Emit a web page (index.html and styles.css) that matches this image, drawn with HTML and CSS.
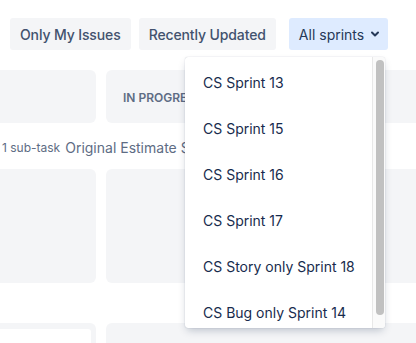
FILE: index.html
```html
<!DOCTYPE html>
<html lang="en">
<head>
  <meta charset="UTF-8" />
  <title>Board</title>
  <link rel="stylesheet" href="styles.css">
</head>
<body>
  <div class="toolbar">
    <button class="filter">Only My Issues</button>
    <button class="filter">Recently Updated</button>
    <button class="filter sprints">All sprints
      <svg width="10" height="10" viewBox="0 0 10 10"><path d="M2 3.5 L5 6.5 L8 3.5" fill="none" stroke="#253858" stroke-width="2" stroke-linecap="round" stroke-linejoin="round"/></svg>
    </button>
  </div>

  <div class="board">
    <div class="col-row">
      <div class="col-head"></div>
      <div class="col-head">IN PROGRESS</div>
    </div>
    <div class="lane-title">
      <span class="subtasks">1 sub-task</span>
      <span class="estimate">Original Estimate Sum</span>
    </div>
    <div class="col-row">
      <div class="col-body"></div>
      <div class="col-body"></div>
    </div>
    <div class="col-row next">
      <div class="col-body"><div class="card"></div></div>
      <div class="col-body"></div>
    </div>
  </div>

  <div class="dropdown">
    <ul class="sprint-list">
      <li>CS Sprint 13</li>
      <li>CS Sprint 15</li>
      <li>CS Sprint 16</li>
      <li>CS Sprint 17</li>
      <li>CS Story only Sprint 18</li>
      <li>CS Bug only Sprint 14</li>
    </ul>
    <div class="scroll-track"><div class="scroll-thumb"></div></div>
  </div>
</body>
</html>
```

FILE: styles.css
```css
body {
  margin: 0;
  width: 416px;
  height: 343px;
  overflow: hidden;
  position: relative;
  font-family: Inter, "Noto Sans", sans-serif;
  background: #fff;
  color: #172b4d;
}
.toolbar {
  display: flex;
  padding: 18px 0 0 10px;
  height: 32px;
}
.filter {
  height: 32px;
  padding: 0 10px;
  margin-right: 8px;
  border: none;
  border-radius: 3px;
  background: #f4f5f7;
  color: #42526e;
  font-family: inherit;
  font-size: 14px;
  font-weight: 500;
  letter-spacing: -0.12px;
  display: flex;
  align-items: center;
  gap: 6px;
}
.filter.sprints {
  margin-left: 5px;
  padding-right: 8px;
  background: #deebff;
  color: #253858;
  font-weight: 400;
  letter-spacing: 0;
}
.board {
  margin-top: 20px;
}
.col-row {
  display: grid;
  grid-template-columns: 96px 1fr;
  gap: 10px;
}
.col-head {
  height: 53px;
  background: #f4f5f7;
  border-radius: 0 6px 6px 0;
  padding-left: 17px;
  font-size: 12px;
  font-weight: 600;
  color: #5e6c84;
  line-height: 56px;
  white-space: nowrap;
  overflow: hidden;
}
.col-head + .col-head,
.col-body + .col-body {
  border-radius: 6px 0 0 6px;
}
.lane-title {
  height: 46px;
  padding: 2px 0 0 2px;
  display: flex;
  align-items: center;
  gap: 5px;
  color: #5e6c84;
  box-sizing: border-box;
  white-space: nowrap;
  overflow: hidden;
}
.subtasks {
  font-size: 12px;
}
.estimate {
  font-size: 14px;
}
.col-body {
  height: 114px;
  background: #f4f5f7;
  border-radius: 0 6px 6px 0;
}
.col-row.next {
  margin-top: 40px;
}
.col-row.next .col-body {
  height: 20px;
  border-bottom-left-radius: 0;
  border-bottom-right-radius: 0;
}
.card {
  margin: 6px 5px 0 0;
  height: 14px;
  background: #fff;
  border-radius: 0 3px 0 0;
}
.dropdown {
  position: absolute;
  left: 185px;
  top: 57px;
  width: 200px;
  height: 271px;
  background: #fff;
  border-radius: 3px;
  box-shadow: 0 4px 8px -2px rgba(9, 30, 66, 0.25), 0 0 1px rgba(9, 30, 66, 0.31);
  display: flex;
  overflow: hidden;
}
.sprint-list {
  list-style: none;
  margin: 0;
  padding: 3px 0 0;
  flex: 1;
  overflow: hidden;
}
.sprint-list li {
  height: 46px;
  line-height: 46px;
  padding-left: 18px;
  font-size: 14px;
  color: #172b4d;
  white-space: nowrap;
}
.scroll-track {
  width: 13px;
  background: #fafafa;
  border-left: 1px solid #e8e8e8;
  padding: 3px 0 0 3px;
  box-sizing: border-box;
}
.scroll-thumb {
  width: 8px;
  height: 255px;
  background: #c1c1c1;
  border-radius: 4px;
}
```
